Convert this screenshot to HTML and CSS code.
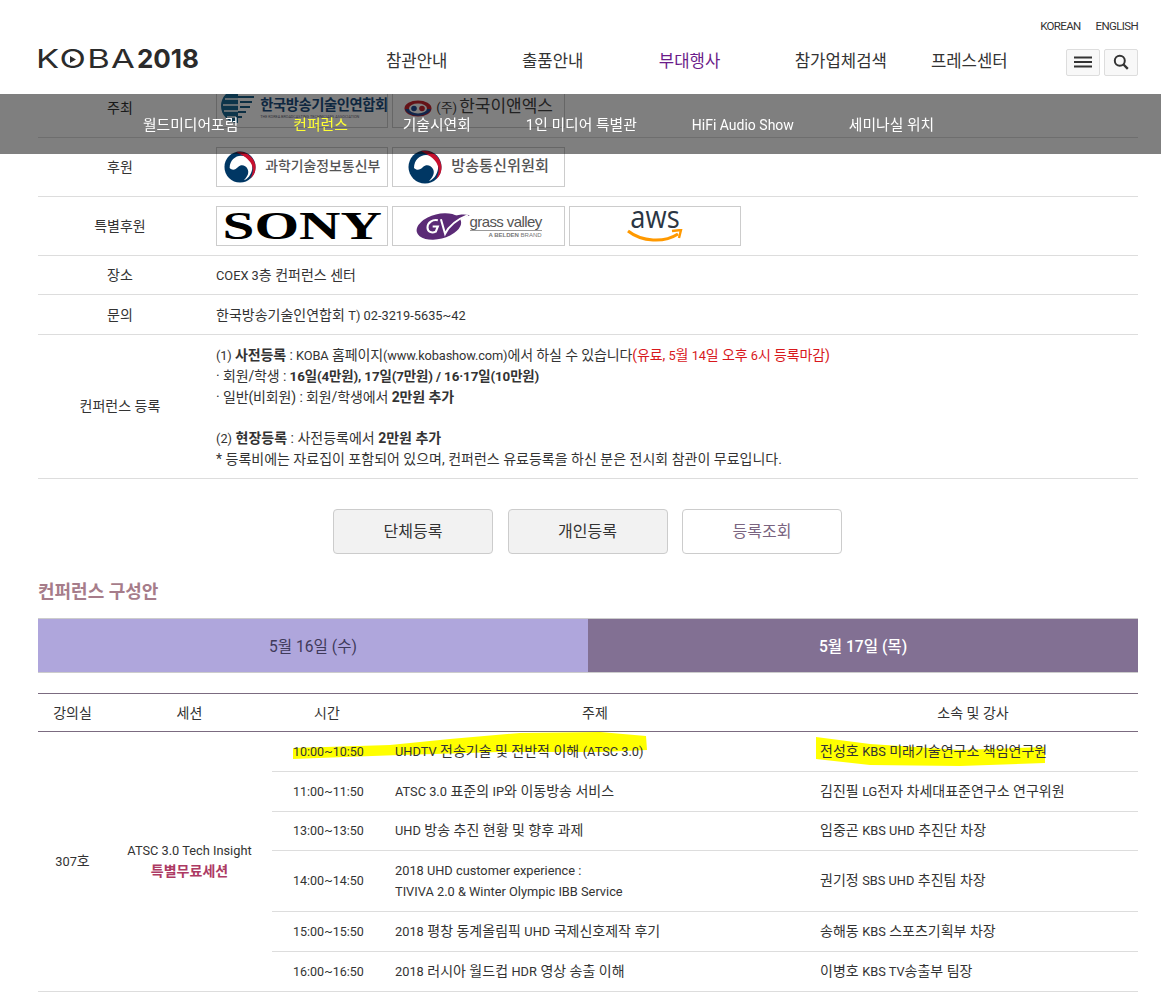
FILE: index.html
```html
<!DOCTYPE html>
<html lang="ko">
<head>
    <meta charset="UTF-8">
    <meta name="viewport" content="width=device-width, initial-scale=1.0">
    <title>KOBA 2018 컨퍼런스</title>
    <link rel="stylesheet" href="styles.css">
</head>
<body>

    <header class="site-header">
        <div class="lang-links"><a>KOREAN</a><a>ENGLISH</a></div>
        <div class="header-main">
            <div class="logo">
                <span class="logo-koba">KOBA</span><span class="logo-year">2018</span>
                <svg class="logo-play" width="6" height="7" viewBox="0 0 6 7"><path d="M0 0l6 3.500-6 3.500z" fill="#2b2b2b"/></svg>
            </div>
            <nav class="main-nav">
                <a class="nav-1">참관안내</a>
                <a class="nav-2">출품안내</a>
                <a class="nav-3 active">부대행사</a>
                <a class="nav-4">참가업체검색</a>
                <a class="nav-5">프레스센터</a>
            </nav>
            <div class="header-buttons">
                <div class="icon-btn">
                    <svg width="18" height="12" viewBox="0 0 18 12"><path d="M0 1.5h18M0 6h18M0 10.5h18" stroke="#333" stroke-width="2"/></svg>
                </div>
                <div class="icon-btn">
                    <svg width="16" height="16" viewBox="0 0 16 16"><circle cx="6.8" cy="6.8" r="5" fill="none" stroke="#333" stroke-width="2"/><path d="M10.5 10.5l4.3 4.3" stroke="#333" stroke-width="2.4"/></svg>
                </div>
            </div>
        </div>
    </header>

    <div class="sub-nav">
        <a>월드미디어포럼</a>
        <a class="active">컨퍼런스</a>
        <a>기술시연회</a>
        <a>1인 미디어 특별관</a>
        <a class="sub-en">HiFi Audio Show</a>
        <a>세미나실 위치</a>
    </div>

    <div class="container">
        <table class="info-table">
            <tr>
                <th>주최</th>
                <td>
                    <div class="logo-row">
                        <div class="logo-card org-kobeta">
                            <svg width="38" height="38" viewBox="0 0 38 38"><path d="M20 2A17 17 0 0 0 20 36z" fill="#1b6a94"/><path d="M7 12h14M5 18h16M6 24h15M9 30h12" stroke="#fff" stroke-width="1.6"/><path d="M16 5h20M20 10h16M22 15h12M22 20h10M20 25h8M18 30h6" stroke="#1b5f86" stroke-width="2"/></svg>
                            <div class="kobeta-text"><span>한국방송기술인연합회</span><small>THE KOREA BROADCASTING TECHNICIANS ASSOCIATION</small></div>
                        </div>
                        <div class="logo-card org-enx">
                            <svg width="28" height="17" viewBox="0 0 28 17"><ellipse cx="14" cy="8.5" rx="13.5" ry="8" fill="#c8242f"/><path d="M1 9c3 9 23 9 26 0z" fill="#234a94"/><ellipse cx="14" cy="8.5" rx="9" ry="5" fill="#fff"/><circle cx="10" cy="8.5" r="2.8" fill="#234a94"/><circle cx="18" cy="8.5" r="2.8" fill="#c8242f"/></svg>
                            <span><small>(주)</small>한국이앤엑스</span>
                        </div>
                    </div>
                </td>
            </tr>
            <tr>
                <th>후원</th>
                <td>
                    <div class="logo-row">
                        <div class="logo-card org-gov gov-1">
                            <svg width="32" height="34" viewBox="0 0 34 36"><circle cx="17" cy="18" r="16.5" fill="#003764"/><path d="M6 19C6 11 12 6 18 6c8 0 13 6 12 14-1 6-5 11-9 12 4-4 6-8 4-12-2-4-7-5-10-2-3 3-6 4-9 1z" fill="#fff"/><path d="M13 2c11-2 21 7 20.500 17-.1 5-2.500 9-5.500 11 3-5 4-11 0-17-4-6-10-8-15-11z" fill="#c8102e"/></svg>
                            <span>과학기술정보통신부</span>
                        </div>
                        <div class="logo-card org-gov gov-2">
                            <svg width="34" height="36" viewBox="0 0 34 36"><circle cx="17" cy="18" r="16.5" fill="#003764"/><path d="M6 19C6 11 12 6 18 6c8 0 13 6 12 14-1 6-5 11-9 12 4-4 6-8 4-12-2-4-7-5-10-2-3 3-6 4-9 1z" fill="#fff"/><path d="M13 2c11-2 21 7 20.500 17-.1 5-2.500 9-5.500 11 3-5 4-11 0-17-4-6-10-8-15-11z" fill="#c8102e"/></svg>
                            <span>방송통신위원회</span>
                        </div>
                    </div>
                </td>
            </tr>
            <tr>
                <th>특별후원</th>
                <td>
                    <div class="logo-row">
                        <div class="logo-card org-sony"><span>SONY</span></div>
                        <div class="logo-card org-gv">
                            <svg width="54" height="31" viewBox="0 0 52 30"><ellipse cx="22" cy="15" rx="22" ry="12" transform="rotate(-14 22 15)" fill="#5b2a76"/><path d="M36 5c6-2 12-2 16-1-5 1-10 4-14 8z" fill="#5b2a76"/><path d="M21 9c-5-1-10 2-10 7 0 4 4 6 8 4l2-5h-5" fill="none" stroke="#fff" stroke-width="2"/><path d="M24 8l4 14C32 14 40 8 50 4" fill="none" stroke="#fff" stroke-width="2"/></svg>
                            <div class="gv-text"><span class="gv-name">grass valley</span><span class="gv-sub"><b>A BELDEN</b> BRAND</span></div>
                        </div>
                        <div class="logo-card org-aws">
                            <span>aws</span>
                            <svg width="56" height="14" viewBox="0 0 56 14"><path d="M1 2c14 11 36 12 50 3" fill="none" stroke="#f90" stroke-width="3"/><path d="M45 2l9-1-2 8" fill="none" stroke="#f90" stroke-width="2.4"/></svg>
                        </div>
                    </div>
                </td>
            </tr>
            <tr class="row-place">
                <th>장소</th>
                <td><span class="en">COEX 3</span>층 컨퍼런스 센터</td>
            </tr>
            <tr class="row-contact">
                <th>문의</th>
                <td>한국방송기술인연합회 <span class="en">T) 02-3219-5635~42</span></td>
            </tr>
            <tr>
                <th>컨퍼런스 등록</th>
                <td class="reg-text">
                    <span class="tight"><span class="en">(1)</span> <b>사전등록</b> : <span class="en">KOBA</span> 홈페이지<span class="en">(www.kobashow.com)</span>에서 하실 수 있습니다<span class="red">(유료, <span class="en">5</span>월 <span class="en">14</span>일 오후 <span class="en">6</span>시 등록마감)</span></span><br>
                    <span class="tight">· 회원/학생 : <b class="fees">16일(4만원), 17일(7만원) / 16·17일(10만원)</b></span><br>
                    <span class="tight">· 일반(비회원) : 회원/학생에서 <b>2만원 추가</b></span><br>
                    <br>
                    <span class="en">(2)</span> <b>현장등록</b> : 사전등록에서 <b>2만원 추가</b><br>
                    * 등록비에는 자료집이 포함되어 있으며, 컨퍼런스 유료등록을 하신 분은 전시회 참관이 무료입니다.
                </td>
            </tr>
        </table>

        <div class="btn-row">
            <a class="btn">단체등록</a>
            <a class="btn">개인등록</a>
            <a class="btn btn-white">등록조회</a>
        </div>

        <h3 class="section-title">컨퍼런스 구성안</h3>

        <div class="day-tabs">
            <div class="day-tab day-16">5월 16일 (수)</div>
            <div class="day-tab day-17">5월 17일 (목)</div>
        </div>

        <table class="schedule">
            <colgroup>
                <col class="col-room"><col class="col-session"><col class="col-time"><col class="col-topic"><col class="col-speaker">
            </colgroup>
            <tr>
                <th>강의실</th><th>세션</th><th>시간</th><th>주제</th><th>소속 및 강사</th>
            </tr>
            <tr class="h40">
                <td rowspan="6" class="center"><span class="en">307</span>호</td>
                <td rowspan="6" class="center session"><span class="en">ATSC 3.0 Tech Insight</span><br><b>특별무료세션</b></td>
                <td class="time">10:00~10:50</td>
                <td class="topic"><span class="en">UHDTV</span> 전송기술 및 전반적 이해 <span class="en">(ATSC 3.0)</span></td>
                <td class="speaker">전성호 <span class="en">KBS</span> 미래기술연구소 책임연구원</td>
            </tr>
            <tr class="h40"><td class="time">11:00~11:50</td><td class="topic"><span class="en">ATSC 3.0</span> 표준의 <span class="en">IP</span>와 이동방송 서비스</td><td class="speaker">김진필 <span class="en">LG</span>전자 차세대표준연구소 연구위원</td></tr>
            <tr class="h39"><td class="time">13:00~13:50</td><td class="topic"><span class="en">UHD</span> 방송 추진 현황 및 향후 과제</td><td class="speaker">임중곤 <span class="en">KBS UHD</span> 추진단 차장</td></tr>
            <tr class="h61"><td class="time">14:00~14:50</td><td class="topic"><span class="en">2018 UHD customer experience :</span><br><span class="en">TIVIVA 2.0 &amp; Winter Olympic IBB Service</span></td><td class="speaker">권기정 <span class="en">SBS UHD</span> 추진팀 차장</td></tr>
            <tr class="h40"><td class="time">15:00~15:50</td><td class="topic"><span class="en">2018</span> 평창 동계올림픽 <span class="en">UHD</span> 국제신호제작 후기</td><td class="speaker">송해동 <span class="en">KBS</span> 스포츠기획부 차장</td></tr>
            <tr class="h40"><td class="time">16:00~16:50</td><td class="topic"><span class="en">2018</span> 러시아 월드컵 <span class="en">HDR</span> 영상 송출 이해</td><td class="speaker">이병호 <span class="en">KBS TV</span>송출부 팀장</td></tr>
        </table>

        <!-- highlighter marks left on the screenshot -->
        <svg class="marker" width="1161" height="40" viewBox="0 0 1161 40">
            <path d="M293 18L390 15L450 9L520 3L600 2L646 6L647 20L600 22L500 22L400 25L345 27L293 29z" fill="#ffff00"/>
            <path d="M816 7L870 14L960 20L1045 17L1045 33L960 36L870 35L816 29z" fill="#ffff00"/>
        </svg>
    </div>

</body>
</html>
```

FILE: styles.css
```css
body {
    font-family: Roboto, "Noto Sans CJK KR", sans-serif;
    font-size: 14px;
    color: #333;
    margin: 0;
    padding: 0;
    background: #fff;
    overflow: hidden;
}
a {
    color: inherit;
    text-decoration: none;
}
.en {
    font-size: 12.8px;
    line-height: 1;
}
.tight {
    letter-spacing: -0.12px;
}

/* header, fixed over the page */
.site-header {
    position: fixed;
    left: 0;
    right: 0;
    top: 0;
    height: 94px;
    background: #fff;
    z-index: 10;
}
.lang-links {
    display: flex;
    justify-content: flex-end;
    gap: 15px;
    padding: 18px 23px 0 0;
    font-size: 11.5px;
    line-height: 16px;
    letter-spacing: -0.65px;
}
.header-main {
    display: flex;
    align-items: center;
    padding: 0 23px 0 38px;
    margin-top: 3px;
    height: 50px;
}
.logo {
    position: relative;
    width: 163px;
    margin-top: -6px;
    margin-left: -2px;
    color: #2b2b2b;
    display: flex;
    align-items: baseline;
    font-family: Inter, sans-serif;
    font-size: 25px;
    line-height: 30px;
}
.logo-koba {
    display: inline-block;
    width: 102px;
    font-weight: 400;
    letter-spacing: 1px;
    transform: scaleX(1.38);
    transform-origin: left center;
}
.logo-year {
    font-size: 26px;
    font-weight: 700;
    letter-spacing: 0;
}
.logo-play {
    position: absolute;
    left: 34px;
    top: 12px;
}
.main-nav {
    flex: 1;
    display: flex;
    margin-top: -4px;
    font-size: 16.7px;
}
.nav-1 { margin-left: 187px; }
.nav-2 { margin-left: 74.5px; }
.nav-3 { margin-left: 75.5px; }
.nav-4 { margin-left: 74.5px; }
.nav-5 { margin-left: 44px; }
.main-nav .active {
    color: #6a1b8a;
}
.header-buttons {
    display: flex;
    gap: 4px;
}
.icon-btn {
    width: 32px;
    height: 25px;
    border: 1px solid #ddd;
    border-radius: 2px;
    background: #f8f8f8;
    display: flex;
    align-items: center;
    justify-content: center;
}

.sub-nav {
    position: fixed;
    left: 0;
    right: 0;
    top: 94px;
    height: 39px;
    padding: 21px 0 0 143px;
    background: rgba(0,0,0,0.5);
    z-index: 9;
    display: flex;
    align-items: baseline;
    gap: 55px;
    color: #fff;
    font-size: 14.8px;
    line-height: 20px;
}
.sub-nav .active {
    color: #ffff33;
}
.sub-nav .sub-en {
    font-size: 14px;
}

.container {
    position: relative;
    width: 1100px;
    margin-left: 38px;
    padding-top: 79px;
}

/* info table */
.info-table {
    width: 100%;
    border-collapse: collapse;
}
.info-table th {
    width: 164px;
    font-weight: 400;
    text-align: center;
    line-height: 20px;
    padding: 8.5px 0 9.5px 0;
    border-bottom: 1px solid #ddd;
}
.info-table td {
    border-bottom: 1px solid #ddd;
    padding: 9px 0 9px 14px;
    line-height: 20px;
}
.row-place td { height: 20px; }
.row-contact td { height: 21px; }
.info-table .row-contact th { padding: 10px 0 9px 0; }
.logo-row {
    display: flex;
    gap: 4px;
}
.logo-card {
    width: 170.4px;
    height: 38px;
    border: 1px solid #ccc;
    display: flex;
    align-items: center;
    justify-content: center;
    gap: 4px;
    background: #fff;
}
.org-kobeta svg {
    margin-top: -4px;
}
.kobeta-text {
    display: flex;
    flex-direction: column;
    align-items: flex-start;
    width: 126px;
}
.kobeta-text span {
    font-weight: 700;
    font-size: 14.3px;
    line-height: 18px;
    color: #1c4e80;
    letter-spacing: -0.4px;
    white-space: nowrap;
}
.kobeta-text small {
    font-size: 3.8px;
    line-height: 6px;
    color: #667;
    white-space: nowrap;
}
.org-enx span {
    font-size: 17px;
    line-height: 24px;
    margin-top: -3px;
    color: #444;
}
.org-enx small {
    font-size: 13px;
    margin-right: 2px;
}
.org-gov {
    gap: 9px;
    color: #555;
    font-weight: 500;
}
.org-gov span {
    line-height: 24px;
    margin-top: -2px;
}
.gov-1 span {
    font-size: 13.9px;
}
.gov-2 span {
    font-size: 15.2px;
}
.org-sony span {
    font-family: "Liberation Serif", serif;
    font-weight: 700;
    font-size: 39px;
    line-height: 38px;
    color: #000;
    transform: scaleX(1.47);
}
.org-gv {
    gap: 0;
}
.gv-text {
    display: flex;
    flex-direction: column;
    align-items: flex-end;
    font-family: "Liberation Sans", sans-serif;
}
.gv-name {
    font-size: 15px;
    letter-spacing: -0.6px;
    line-height: 17px;
    color: #555;
    border-bottom: 1px solid #999;
}
.gv-sub {
    font-size: 6px;
    line-height: 9px;
    color: #777;
}
.org-aws {
    flex-direction: column;
    gap: 0;
}
.org-aws span {
    font-family: "Open Sans", sans-serif;
    font-size: 31px;
    line-height: 22px;
    margin: -4px 0 2px 0;
    color: #2b3644;
    transform: scaleX(0.88);
}
.info-table .reg-text {
    line-height: 20.8px;
    padding-top: 10px;
    padding-bottom: 8px;
}
.red {
    color: #d8181c;
}
.fees {
    font-size: 13.4px;
    line-height: 1;
}

/* buttons */
.btn-row {
    display: flex;
    justify-content: center;
    gap: 14.5px;
    margin-top: 30px;
    padding-right: 1px;
}
.btn {
    width: 158px;
    height: 43px;
    line-height: 43px;
    text-align: center;
    font-size: 16px;
    background: #f2f2f2;
    border: 1px solid #ccc;
    border-radius: 4px;
}
.btn-white {
    background: #fff;
    color: #7a6480;
}
.section-title {
    margin: 26px 0 14px 0;
    font-size: 18px;
    line-height: 24px;
    font-weight: 700;
    color: #a67c8a;
}

.day-tabs {
    display: flex;
    height: 53px;
    border: 1px solid #ccc;
    border-width: 1px 0;
    font-size: 15.6px;
}
.day-tab {
    flex: 1;
    display: flex;
    align-items: center;
    justify-content: center;
}
.day-16 {
    background: #afa6dc;
    color: #3f3a5a;
}
.day-17 {
    background: #827093;
    color: #fff;
    font-weight: 500;
}

/* schedule */
.schedule {
    position: relative;
    z-index: 1;
    width: 100%;
    border-collapse: collapse;
    table-layout: fixed;
    margin-top: 20px;
}
.col-room { width: 69px; }
.col-session { width: 165px; }
.col-time { width: 110px; }
.col-topic { width: 426px; }
.schedule th {
    font-weight: 400;
    height: 37px;
    border-top: 1px solid #7b6b80;
    border-bottom: 1px solid #7b6b80;
    padding: 0;
}
.schedule td {
    border-bottom: 1px solid #ddd;
    padding: 0;
    line-height: 21px;
}
.schedule .center {
    text-align: center;
}
.session b {
    color: #ad3a63;
}
.schedule .time {
    padding-left: 21px;
    font-size: 12.5px;
}
.schedule .topic {
    padding-left: 13px;
}
.schedule .speaker {
    padding-left: 12px;
}
.h40 td { height: 39px; }
.h39 td { height: 38px; }
.h61 td { height: 60px; }
.marker {
    position: absolute;
    left: -38px;
    top: 730px;
    z-index: 0;
}
```
